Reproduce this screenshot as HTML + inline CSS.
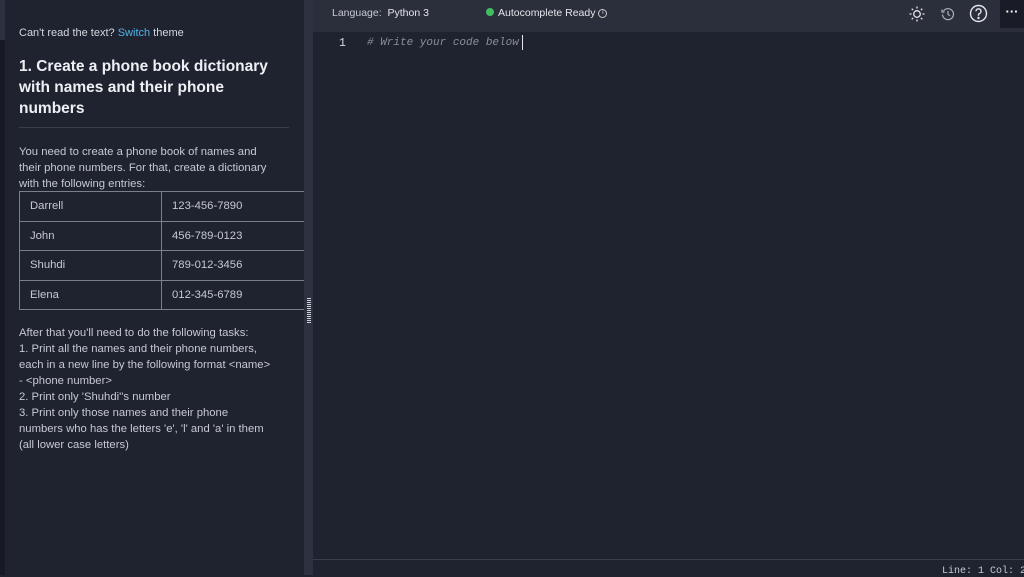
<!DOCTYPE html>
<html><head><style>
*{margin:0;padding:0;box-sizing:border-box}
body{width:1024px;height:575px;overflow:hidden;background:#1f2330;font-family:"Liberation Sans",sans-serif;color:#d4d7de;position:relative}
.lstrip{position:absolute;left:0;top:0;width:5px;height:575px;background:#171a24}
.lstrip2{position:absolute;left:0;top:0;width:5px;height:40px;background:#2e3240}
.left{position:absolute;left:5px;top:0;width:299px;height:575px;background:#1f2330}
.div{position:absolute;left:304px;top:0;width:9px;height:575px;background:#2e3240}
.grip{position:absolute;left:307px;top:298px;width:4px;height:26px;background:repeating-linear-gradient(#cfd2da 0 1px,transparent 1px 2px)}
.top{position:absolute;left:313px;top:0;width:711px;height:32px;background:#2b2f3b}
.dots{position:absolute;left:1000px;top:0;width:24px;height:28px;background:#191c26;color:#fff;font-size:13px;font-weight:bold;text-align:center;line-height:24px}
.t{position:absolute;white-space:nowrap}
h1{position:absolute;left:19px;top:56px;font-size:15.5px;line-height:21px;font-weight:bold;color:#eef0f4;width:270px}
.hr{position:absolute;left:19px;top:127px;width:270px;height:1px;background:#3a3e4b}
.p{position:absolute;left:19px;font-size:11.3px;line-height:16px;color:#c6c9d1;white-space:nowrap}
table{position:absolute;left:19px;top:191px;border-collapse:collapse;font-size:11.3px;color:#c6c9d1}
td{border:1px solid #7b7f8a;height:29.5px;padding-left:10px}
td:first-child{width:142px}td:last-child{width:143px;border-right:none}
.status{position:absolute;left:313px;top:559px;width:711px;height:1px;background:#3a3e4b}
.mono{font-family:"Liberation Mono",monospace}
</style></head><body>
<div class="lstrip"></div><div class="lstrip2"></div>
<div class="left"></div>
<div class="t" style="left:19px;top:27px;font-size:11px;color:#d4d7de">Can't read the text? <span style="color:#4fb3e6">Switch</span> theme</div>
<h1>1. Create a phone book dictionary with names and their phone numbers</h1>
<div class="hr"></div>
<div class="p" style="top:144px">You need to create a phone book of names and<br>their phone numbers. For that, create a dictionary<br>with the following entries:</div>
<table>
<tr><td>Darrell</td><td>123-456-7890</td></tr>
<tr><td>John</td><td>456-789-0123</td></tr>
<tr><td>Shuhdi</td><td>789-012-3456</td></tr>
<tr><td>Elena</td><td>012-345-6789</td></tr>
</table>
<div class="p" style="top:325px">After that you'll need to do the following tasks:<br>1. Print all the names and their phone numbers,<br>each in a new line by the following format &lt;name&gt;<br>- &lt;phone number&gt;<br>2. Print only 'Shuhdi''s number<br>3. Print only those names and their phone<br>numbers who has the letters 'e', 'l' and 'a' in them<br>(all lower case letters)</div>
<div class="div"></div><div class="grip"></div>
<div class="top"></div>
<div class="t" style="left:332px;top:7px;font-size:10.5px;color:#c6c9d1">Language:&nbsp; <span style="color:#e4e6eb">Python 3</span></div>
<div class="t" style="left:486px;top:7px;font-size:10.5px;color:#e4e6eb"><span style="display:inline-block;width:8px;height:8px;border-radius:50%;background:#3fbf5f;margin-right:4px"></span>Autocomplete Ready <span style="display:inline-block;width:9px;height:9px;border:1px solid #ccc;border-radius:50%;font-size:6px;line-height:7px;text-align:center;vertical-align:middle">i</span></div>
<svg class="t" style="left:909px;top:6px" width="16" height="16" viewBox="0 0 16 16" fill="none" stroke="#e4e6eb" stroke-width="1.3"><circle cx="8" cy="8" r="3.3"/><path d="M8 0.5v2M8 13.5v2M0.5 8h2M13.5 8h2M2.7 2.7l1.4 1.4M11.9 11.9l1.4 1.4M2.7 13.3l1.4-1.4M11.9 4.1l1.4-1.4"/></svg>
<svg class="t" style="left:941px;top:7px" width="14" height="14" viewBox="0 0 14 14" fill="none" stroke="#aeb2bb" stroke-width="1.2"><path d="M2.5 4A5.5 5.5 0 1 1 1.5 7.5"/><path d="M1 2.5v2.5h2.5"/><path d="M7 4v3.3l2 1.5"/></svg>
<svg class="t" style="left:969px;top:4px" width="19" height="19" viewBox="0 0 19 19" fill="none" stroke="#e4e6eb" stroke-width="1.4"><circle cx="9.5" cy="9.5" r="8"/><path d="M7 7.3a2.5 2.5 0 1 1 3.4 2.3c-.7.3-.9.8-.9 1.6v.5"/><circle cx="9.5" cy="14" r=".5" fill="#e4e6eb"/></svg>
<div class="dots">···</div>
<div class="t mono" style="left:339px;top:37px;font-size:11.5px;color:#d4d7de">1</div>
<div class="t mono" style="left:367px;top:37px;font-size:11px;color:#8a8e99;font-style:italic"># Write your code below</div>
<div class="t" style="left:522px;top:35px;width:1px;height:15px;background:#e4e6eb"></div>
<div class="status"></div>
<div class="t mono" style="left:942px;top:566px;font-size:10px;color:#c6c9d1">Line: 1 Col: 2</div>
</body></html>
